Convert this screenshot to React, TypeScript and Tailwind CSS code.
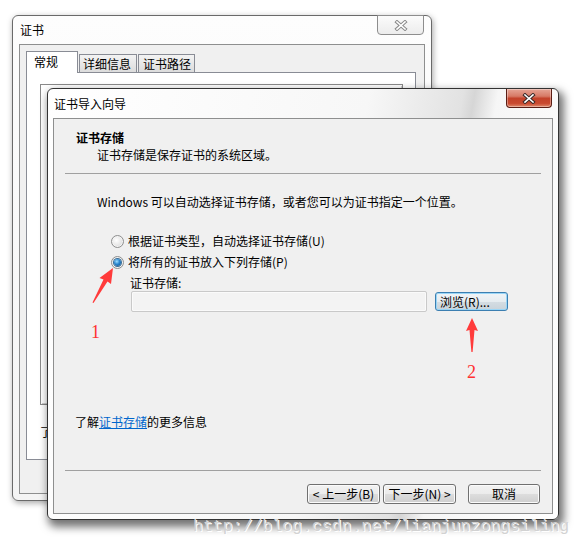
import React from "react";

const ui = "font-['Noto_Sans_CJK_SC','Noto_Sans',sans-serif]";

function XGlyph({ dark, light }: { dark: string; light: string }) {
  return (
    <svg width="14" height="11" viewBox="0 0 14 11">
      <path d="M3 2 L11 9 M11 2 L3 9" stroke={dark} strokeWidth="3.6" strokeLinecap="square" fill="none" />
      <path d="M3 2 L11 9 M11 2 L3 9" stroke={light} strokeWidth="1.6" strokeLinecap="square" fill="none" />
    </svg>
  );
}

function Btn({ children, className = "", focused = false }: { children: React.ReactNode; className?: string; focused?: boolean }) {
  const base = focused
    ? "border-[#3c7fb1] shadow-[inset_0_0_0_1px_#9ad6f7] bg-[linear-gradient(#f0f4f7_0%,#e6ecf0_50%,#d5dde3_50%,#c9d3da_100%)]"
    : "border-[#707070] shadow-[inset_0_0_0_1px_#fbfbfb] bg-[linear-gradient(#f2f2f2_0%,#ebebeb_50%,#dddddd_50%,#cfcfcf_100%)]";
  return (
    <div className={`flex items-center justify-center rounded-[3px] border text-[12px] leading-[16px] text-black ${base} ${className}`}>
      {children}
    </div>
  );
}

function Radio({ checked }: { checked?: boolean }) {
  return (
    <div className="flex h-[13px] w-[13px] items-center justify-center rounded-full border border-[#8e8f8f] bg-[radial-gradient(circle_at_40%_40%,#ffffff_0%,#e6e6e6_55%,#c8c8c8_100%)] shadow-[inset_0_0_0_1px_#f4f4f4]">
      {checked && (
        <div className="h-[7px] w-[7px] rounded-full bg-[radial-gradient(circle_at_40%_35%,#9ee0ff_0%,#2a86cf_45%,#0d4a80_100%)] shadow-[0_0_0_1px_#3b6e96]" />
      )}
    </div>
  );
}

export default function App() {
  return (
    <div className={`relative h-[546px] w-[583px] overflow-hidden bg-white ${ui}`}>
      {/* Outer window 证书 */}
      <div className="absolute left-[12px] top-[15px] flex h-[486px] w-[420px] flex-col rounded-[6px] border border-[#6a6a6a] bg-[linear-gradient(180deg,#fdfdfd_0%,#f4f4f4_100%)] shadow-[1px_2px_6px_rgba(0,0,0,0.35)]">
        <div className="flex h-[28px] items-center pl-[7px] text-[12px] text-black">证书</div>
        <div className="absolute right-[7px] top-[-1px] flex h-[20px] w-[47px] items-center justify-center rounded-b-[4px] border border-[#8d8d8d] bg-[linear-gradient(#fbfbfb,#ececec)]">
          <XGlyph dark="#8a8a8a" light="#ffffff" />
        </div>
        <div className="mx-[6px] h-[450px] border border-[#8e8f8f] bg-[#f0f0f0] pl-[6px] pt-[6px]">
          <div className="relative z-10 flex h-[21px] items-start">
            <div className="h-[22px] w-[52px] border border-b-0 border-[#898c95] bg-white pl-[7px] text-[12px] leading-[19px] text-black">常规</div>
            <div className="ml-px mt-[3px] h-[18px] w-[58px] border border-b-0 border-[#898c95] bg-[linear-gradient(#f3f3f3,#dcdcdc)] pl-[3px] text-[12px] leading-[17px] text-black">详细信息</div>
            <div className="ml-px mt-[3px] h-[18px] w-[57px] border border-b-0 border-[#898c95] bg-[linear-gradient(#f3f3f3,#dcdcdc)] pl-[4px] text-[12px] leading-[17px] text-black">证书路径</div>
          </div>
          <div className="h-[388px] w-[390px] border border-[#898c95] bg-white pl-[13px] pt-[11px]">
            <div className="h-[321px] w-[363px] border border-[#8a8a8a] shadow-[inset_1px_1px_0_#ffffff,inset_-1px_-1px_0_#d0d0d0]" />
            <div className="mt-[19px] text-[12px] leading-[16px] text-black">了解</div>
          </div>
        </div>
      </div>

      {/* Front dialog 证书导入向导 */}
      <div className="absolute left-[47px] top-[88px] flex h-[432px] w-[512px] flex-col rounded-[6px] border border-[#333333] bg-[linear-gradient(100deg,#ffffff_0%,#f7f7f7_55%,#e2e2e2_71%,#d6d6d6_73%,#f6f6f6_77%,#ffffff_100%)] shadow-[3px_5px_9px_2px_rgba(0,0,0,0.55)]">
        <div className="flex h-[29px] items-center pl-[6px] text-[12px] text-black">证书导入向导</div>
        <div className="absolute right-[6px] top-0 flex h-[19px] w-[46px] items-center justify-center rounded-b-[4px] border border-t-0 border-[#5a1d14] bg-[linear-gradient(#e6a595_0%,#d77a66_40%,#c3422a_52%,#c94a30_80%,#e08a6c_100%)] shadow-[inset_0_0_0_1px_rgba(255,255,255,0.35)]">
          <XGlyph dark="#3a2a28" light="#ffffff" />
        </div>
        <div className="mx-[5px] flex h-[396px] flex-col border border-[#8e8f8f] bg-[#f0f0f0] text-[12px] leading-[16px] text-black">
          <div className="pl-[22px] pt-[11px] font-bold">证书存储</div>
          <div className="mt-[1px] pl-[43px]">证书存储是保存证书的系统区域。</div>
          <div className="mx-[11px] mt-[10px] h-px bg-[#a0a0a0]" />
          <div className="mt-[20px] pl-[43px]">Windows 可以自动选择证书存储，或者您可以为证书指定一个位置。</div>
          <div className="mt-[23px] flex h-[16px] items-center gap-[4px] pl-[57px]">
            <Radio />
            <span>根据证书类型，自动选择证书存储(U)</span>
          </div>
          <div className="mt-[5px] flex h-[16px] items-center gap-[4px] pl-[57px]">
            <Radio checked />
            <span>将所有的证书放入下列存储(P)</span>
          </div>
          <div className="mt-[5px] pl-[76px]">证书存储:</div>
          <div className="flex items-start pl-[77px]">
            <div className="h-[21px] w-[296px] rounded-[2px] border border-[#c9c9c9] bg-[#f3f3f3] shadow-[inset_0_0_0_1px_#fafafa]" />
            <Btn focused className="ml-[8px] mt-[1px] h-[19px] w-[73px] justify-start pl-[4px]">浏览(R)...</Btn>
          </div>
          <div className="mt-[102px] pl-[21px]">
            了解<span className="text-[#0066cc] underline">证书存储</span>的更多信息
          </div>
          <div className="mx-[11px] mt-[40px] h-px bg-[#a0a0a0]" />
          <div className="mt-[13px] flex justify-end pr-[12px]">
            <Btn className="h-[20px] w-[73px]">&lt; 上一步(B)</Btn>
            <Btn className="ml-[3px] h-[20px] w-[73px]">下一步(N) &gt;</Btn>
            <Btn className="ml-[12px] h-[20px] w-[72px]">取消</Btn>
          </div>
        </div>
      </div>

      {/* Red annotations */}
      <svg className="pointer-events-none absolute left-0 top-0" width="583" height="546" viewBox="0 0 583 546">
        <polygon points="113,268 111,284 107.5,281.5 93.5,303 92.5,302.5 103.5,279.5 99.5,278" fill="#ff3b3b" />
        <polygon points="472,318 478,331 474.5,330 472.6,352 471.4,352 469.5,330 466,331" fill="#ff3b3b" />
      </svg>
      <div className="absolute left-[91px] top-[321px] font-['Liberation_Serif',serif] text-[18px] leading-[22px] text-[#ff3030]">1</div>
      <div className="absolute left-[467px] top-[361px] font-['Liberation_Serif',serif] text-[18px] leading-[22px] text-[#ff3030]">2</div>

      {/* Watermark */}
      <div className="absolute left-[193px] top-[517px] font-['Liberation_Mono',monospace] text-[16.5px] leading-[20px] text-[#d2d2d2] [text-shadow:1px_1px_0_#ffffff]">
        http://blog.csdn.net/lianjunzongsiling
      </div>
    </div>
  );
}
